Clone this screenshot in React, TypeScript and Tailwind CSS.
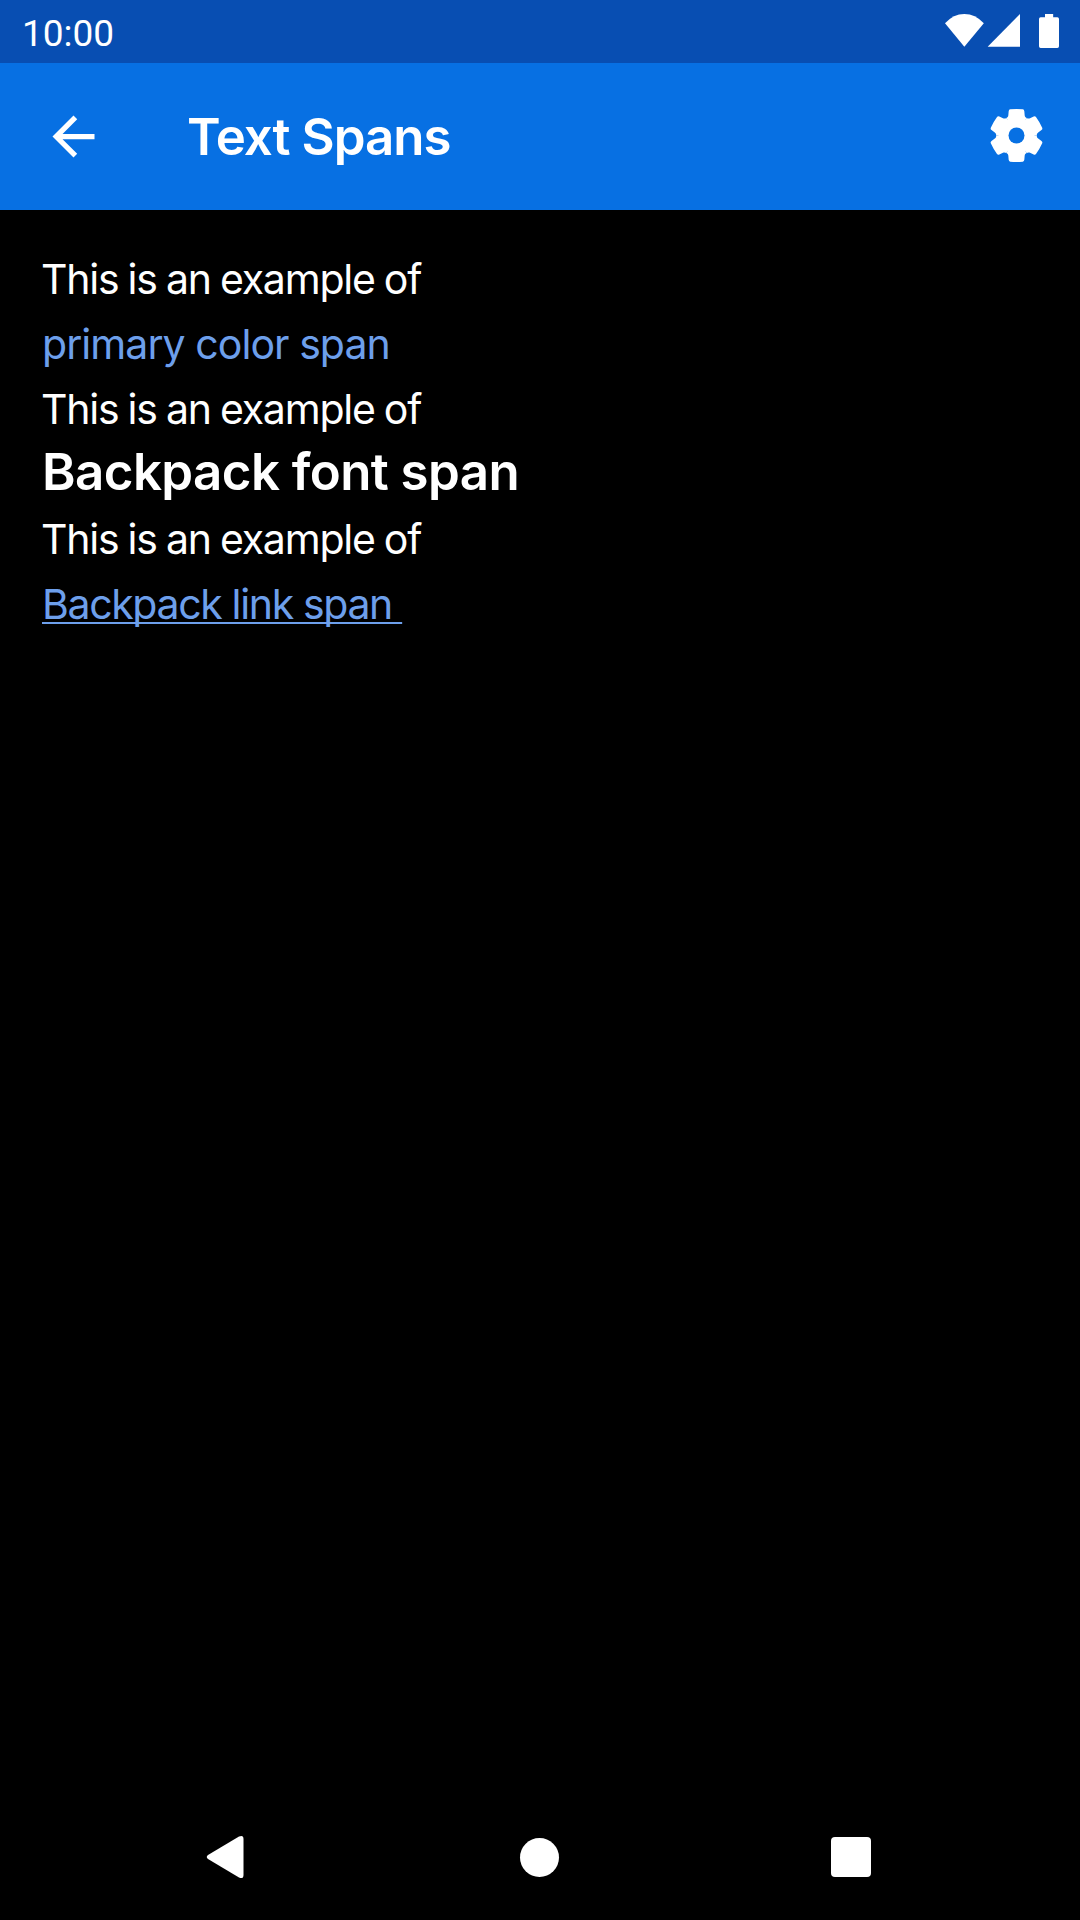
import React from "react";

const TOOTH =
  "M0 0L-30.5 -52.8C-27 -54.5 -25 -57 -24.5 -61L-23.5 -73Q-22.8 -77.5 -19 -78.5Q0 -80.5 19 -78.5Q22.8 -77.5 23.5 -73L24.5 -61C25 -57 27 -54.5 30.5 -52.8Z";

function StatusIcons() {
  return (
    <svg className="mt-3.5 h-[35px] w-[115px]" viewBox="75 42 345 105" fill="#fff">
      <path d="M75 70Q100 42 133 42Q166 42 191.500 70L133 140.500Z" />
      <path d="M203 140.500L300 42V140.500Z" />
      <path d="M375 42H399.500V52H412Q417 52 417 57V139Q417 144 412 144H362Q357 144 357 139V57Q357 52 362 52H375Z" />
    </svg>
  );
}

function Gear() {
  return (
    <svg className="mb-[3px] h-[55px] w-[55px]" viewBox="-82.5 -82.5 165 165" fill="#fff">
      {[0, 60, 120, 180, 240, 300].map((a) => (
        <path key={a} d={TOOTH} transform={`rotate(${a})`} />
      ))}
      <circle r="54" />
      <circle r="24" fill="#0770e3" />
    </svg>
  );
}

function Intro() {
  return <p className="-ml-px tracking-[-1.2px] [word-spacing:-1.2px]">This is an example of</p>;
}

export default function App() {
  return (
    <div className="flex h-[1920px] w-[1080px] flex-col overflow-hidden bg-black font-['Inter',sans-serif] text-white">
      <div className="flex h-[63px] shrink-0 justify-between bg-[#084eb2] pl-[22px] pr-5">
        <span className="font-['Roboto',sans-serif] text-[37px] leading-[68px]">10:00</span>
        <StatusIcons />
      </div>
      <header className="flex h-[147px] shrink-0 items-center bg-[#0770e3] pl-[42px] pr-9">
        <svg className="h-[63px] w-[63px]" viewBox="0 0 24 24" fill="#fff">
          <path d="M20 11H7.830l5.590-5.590L12 4l-8 8 8 8 1.410-1.410L7.830 13H20v-2z" />
        </svg>
        <h1 className="ml-[82px] flex-1 whitespace-nowrap pt-px text-[51px] font-semibold leading-[60px] tracking-[-1px]">Text Spans</h1>
        <Gear />
      </header>
      <main className="flex flex-1 flex-col items-start whitespace-pre pl-[42px] pt-[37px] text-[41px] leading-[65px]">
        <Intro />
        <p className="tracking-[-0.93px] text-[#6d9feb]">primary color span</p>
        <Intro />
        <p className="mb-[5px] text-[51px] font-semibold leading-[60px] tracking-[-0.57px]">Backpack font span</p>
        <Intro />
        <p className="tracking-[-1.35px] text-[#6d9feb] underline decoration-2 underline-offset-[3px] [text-decoration-skip-ink:none]">{"Backpack link span "}</p>
      </main>
      <nav className="flex h-[126px] shrink-0 items-center justify-between pl-[206px] pr-[209px]">
        <svg className="h-11 w-[42px]" viewBox="0 0 42 44" fill="#fff">
          <path d="M2 20L33 1.500Q37.500 -.500 37.500 4V40Q37.500 44.500 33 42.500L2 24Q-.500 22 2 20Z" />
        </svg>
        <div className="size-[39px] rounded-full bg-white" />
        <div className="size-10 rounded bg-white" />
      </nav>
    </div>
  );
}
